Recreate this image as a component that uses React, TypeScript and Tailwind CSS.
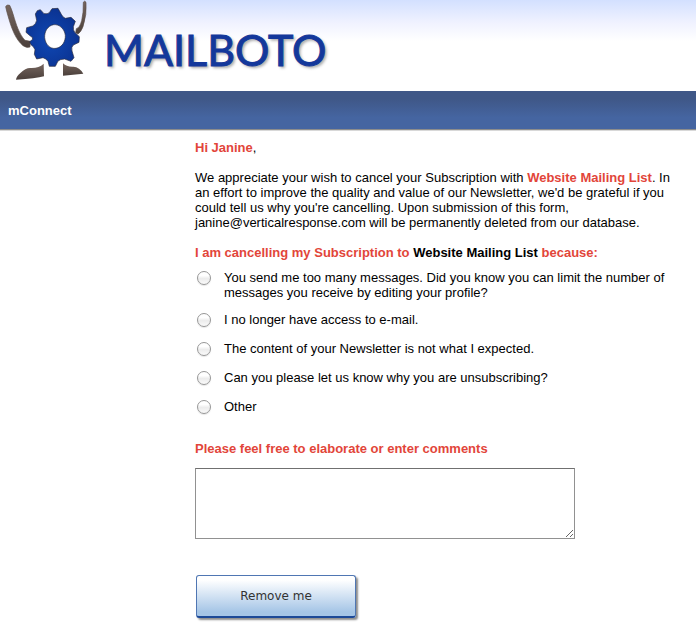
import { useState } from 'react'

const reasons = [
  {
    id: 'too-many',
    label:
      'You send me too many messages. Did you know you can limit the number of messages you receive by editing your profile?',
  },
  { id: 'no-access', label: 'I no longer have access to e-mail.' },
  { id: 'not-expected', label: 'The content of your Newsletter is not what I expected.' },
  { id: 'why', label: 'Can you please let us know why you are unsubscribing?' },
  { id: 'other', label: 'Other' },
]

function LogoMark() {
  return (
    <svg className="h-[90px] w-[100px] shrink-0" viewBox="0 0 300 270" aria-hidden="true">
      <defs>
        <radialGradient id="gear" cx="0.45" cy="0.55" r="0.65">
          <stop offset="0" stopColor="#0f48b4" />
          <stop offset="1" stopColor="#0a2f8c" />
        </radialGradient>
        <linearGradient id="limb" x1="0" y1="0" x2="0" y2="1">
          <stop offset="0" stopColor="#75655e" />
          <stop offset="1" stopColor="#4b403b" />
        </linearGradient>
      </defs>
      <path
        d="M17 20Q20 12 29 16Q34 25 40 45C48 72 58 104 75 121L91 124L90 141Q80 145 69 137C47 118 36 88 27 58Q20 35 17 20Z"
        fill="url(#limb)"
        stroke="#5a4d47"
        strokeWidth="2"
      />
      <path
        d="M250 7Q254 0 258 7Q261 44 249 80Q243 96 234 102L227 98L229 86Q239 84 245 62Q251 38 250 7Z"
        fill="url(#limb)"
        stroke="#5a4d47"
        strokeWidth="2"
      />
      <path
        d="M48 239Q49 229 62 218Q77 203 92 204Q116 205 131 191L132 229Q108 236 48 239Z"
        fill="url(#limb)"
      />
      <path d="M189 190Q200 201 220 200Q239 201 250 221L189 227Z" fill="url(#limb)" />
      <path
        d="M112 32L121 29L132 41Q142 43 148 38L156 26L174 25L184 43Q188 52 196 55L213 52L226 64L220 80Q219 90 224 97L238 110L237 127L220 135Q213 141 216 153L222 173L213 184L194 177Q181 177 174 183L166 199L148 199L144 184Q138 175 129 173L110 177L103 163L105 149Q101 139 93 134L89 125L98 118Q99 111 91 108L78 97L80 83L98 78Q108 73 110 61L106 42ZM161 74C143 77 133 94 134 113C136 133 150 148 168 145C186 142 197 125 196 106C194 87 178 72 161 74Z"
        fill="url(#gear)"
        fillRule="evenodd"
        stroke="#25283c"
        strokeWidth="2"
      />
    </svg>
  )
}

function Header() {
  return (
    <header>
      <div className="flex h-[91px] items-start gap-1 bg-linear-to-b from-[#d3e0ff] via-[#f0f2ff] via-25% to-white to-45%">
        <LogoMark />
        <h1 className="mt-6 font-['Lato',sans-serif] text-[43px] leading-[52px] font-normal text-[#14389b] [text-shadow:2px_2px_3px_rgba(0,0,0,0.35)] [-webkit-text-stroke:1px_#14389b]">
          MAILBOTO
        </h1>
      </div>
      <div className="flex h-[39px] items-center border-b border-[#8c8c8c] bg-linear-to-b from-[#3f5787] from-20% to-[#4565a1] to-70% px-2 text-[13px] font-bold text-white shadow-[0_1px_0_#d8d8d8]">
        mConnect
      </div>
    </header>
  )
}

export default function App() {
  const [reason, setReason] = useState('')
  const [comments, setComments] = useState('')

  return (
    <div className="min-h-screen bg-white font-['Liberation_Sans',Arial,sans-serif] text-[13px] leading-[15px] text-black">
      <Header />
      <main className="ml-[195px] max-w-[484px] pt-[10px] pb-3">
        <p>
          <strong className="text-[#e2453a]">Hi Janine</strong>,
        </p>
        <p className="mt-[15px]">
          We appreciate your wish to cancel your Subscription with{' '}
          <strong className="text-[#e2453a]">Website Mailing List</strong>. In an effort to improve
          the quality and value of our Newsletter, we'd be grateful if you could tell us why you're
          cancelling. Upon submission of this form, janine@verticalresponse.com will be permanently
          deleted from our database.
        </p>

        <form onSubmit={(e) => e.preventDefault()}>
          <fieldset className="mt-[15px]">
            <legend className="font-bold text-[#e2453a]">
              I am cancelling my Subscription to{' '}
              <span className="text-black">Website Mailing List</span> because:
            </legend>
            <div className="mt-[10px] flex flex-col gap-3">
              {reasons.map((item) => (
                <label key={item.id} className="flex min-h-[17px] items-start">
                  <input
                    type="radio"
                    name="reason"
                    value={item.id}
                    checked={reason === item.id}
                    onChange={() => setReason(item.id)}
                    className="mt-px mr-[13px] ml-[2px] size-[14px] shrink-0 appearance-none rounded-full border border-[#979797] bg-linear-to-b from-white from-30% via-[#ececec] via-55% to-[#fafafa] shadow-[0_1px_1px_rgba(0,0,0,0.1)] checked:border-4 checked:border-[#4565a1]"
                  />
                  <span>{item.label}</span>
                </label>
              ))}
            </div>
          </fieldset>

          <label htmlFor="comments" className="mt-[25px] block font-bold text-[#e2453a]">
            Please feel free to elaborate or enter comments
          </label>
          <textarea
            id="comments"
            value={comments}
            onChange={(e) => setComments(e.target.value)}
            className="mt-3 block h-[71px] w-full max-w-[380px] border border-[#919191] border-t-[#707070] bg-white p-1"
          />

          <button
            type="submit"
            className="mt-9 ml-px block h-[43px] w-[160px] rounded-[3px] border border-[#4f76b3] border-b-2 border-b-[#1c4997] bg-linear-to-b from-white from-10% to-[#a5c5e6] to-90% font-['DejaVu_Sans',sans-serif] text-[12px] text-[#333] shadow-[2px_2px_2px_rgba(0,0,0,0.45)]"
          >
            Remove me
          </button>
        </form>
      </main>
    </div>
  )
}
